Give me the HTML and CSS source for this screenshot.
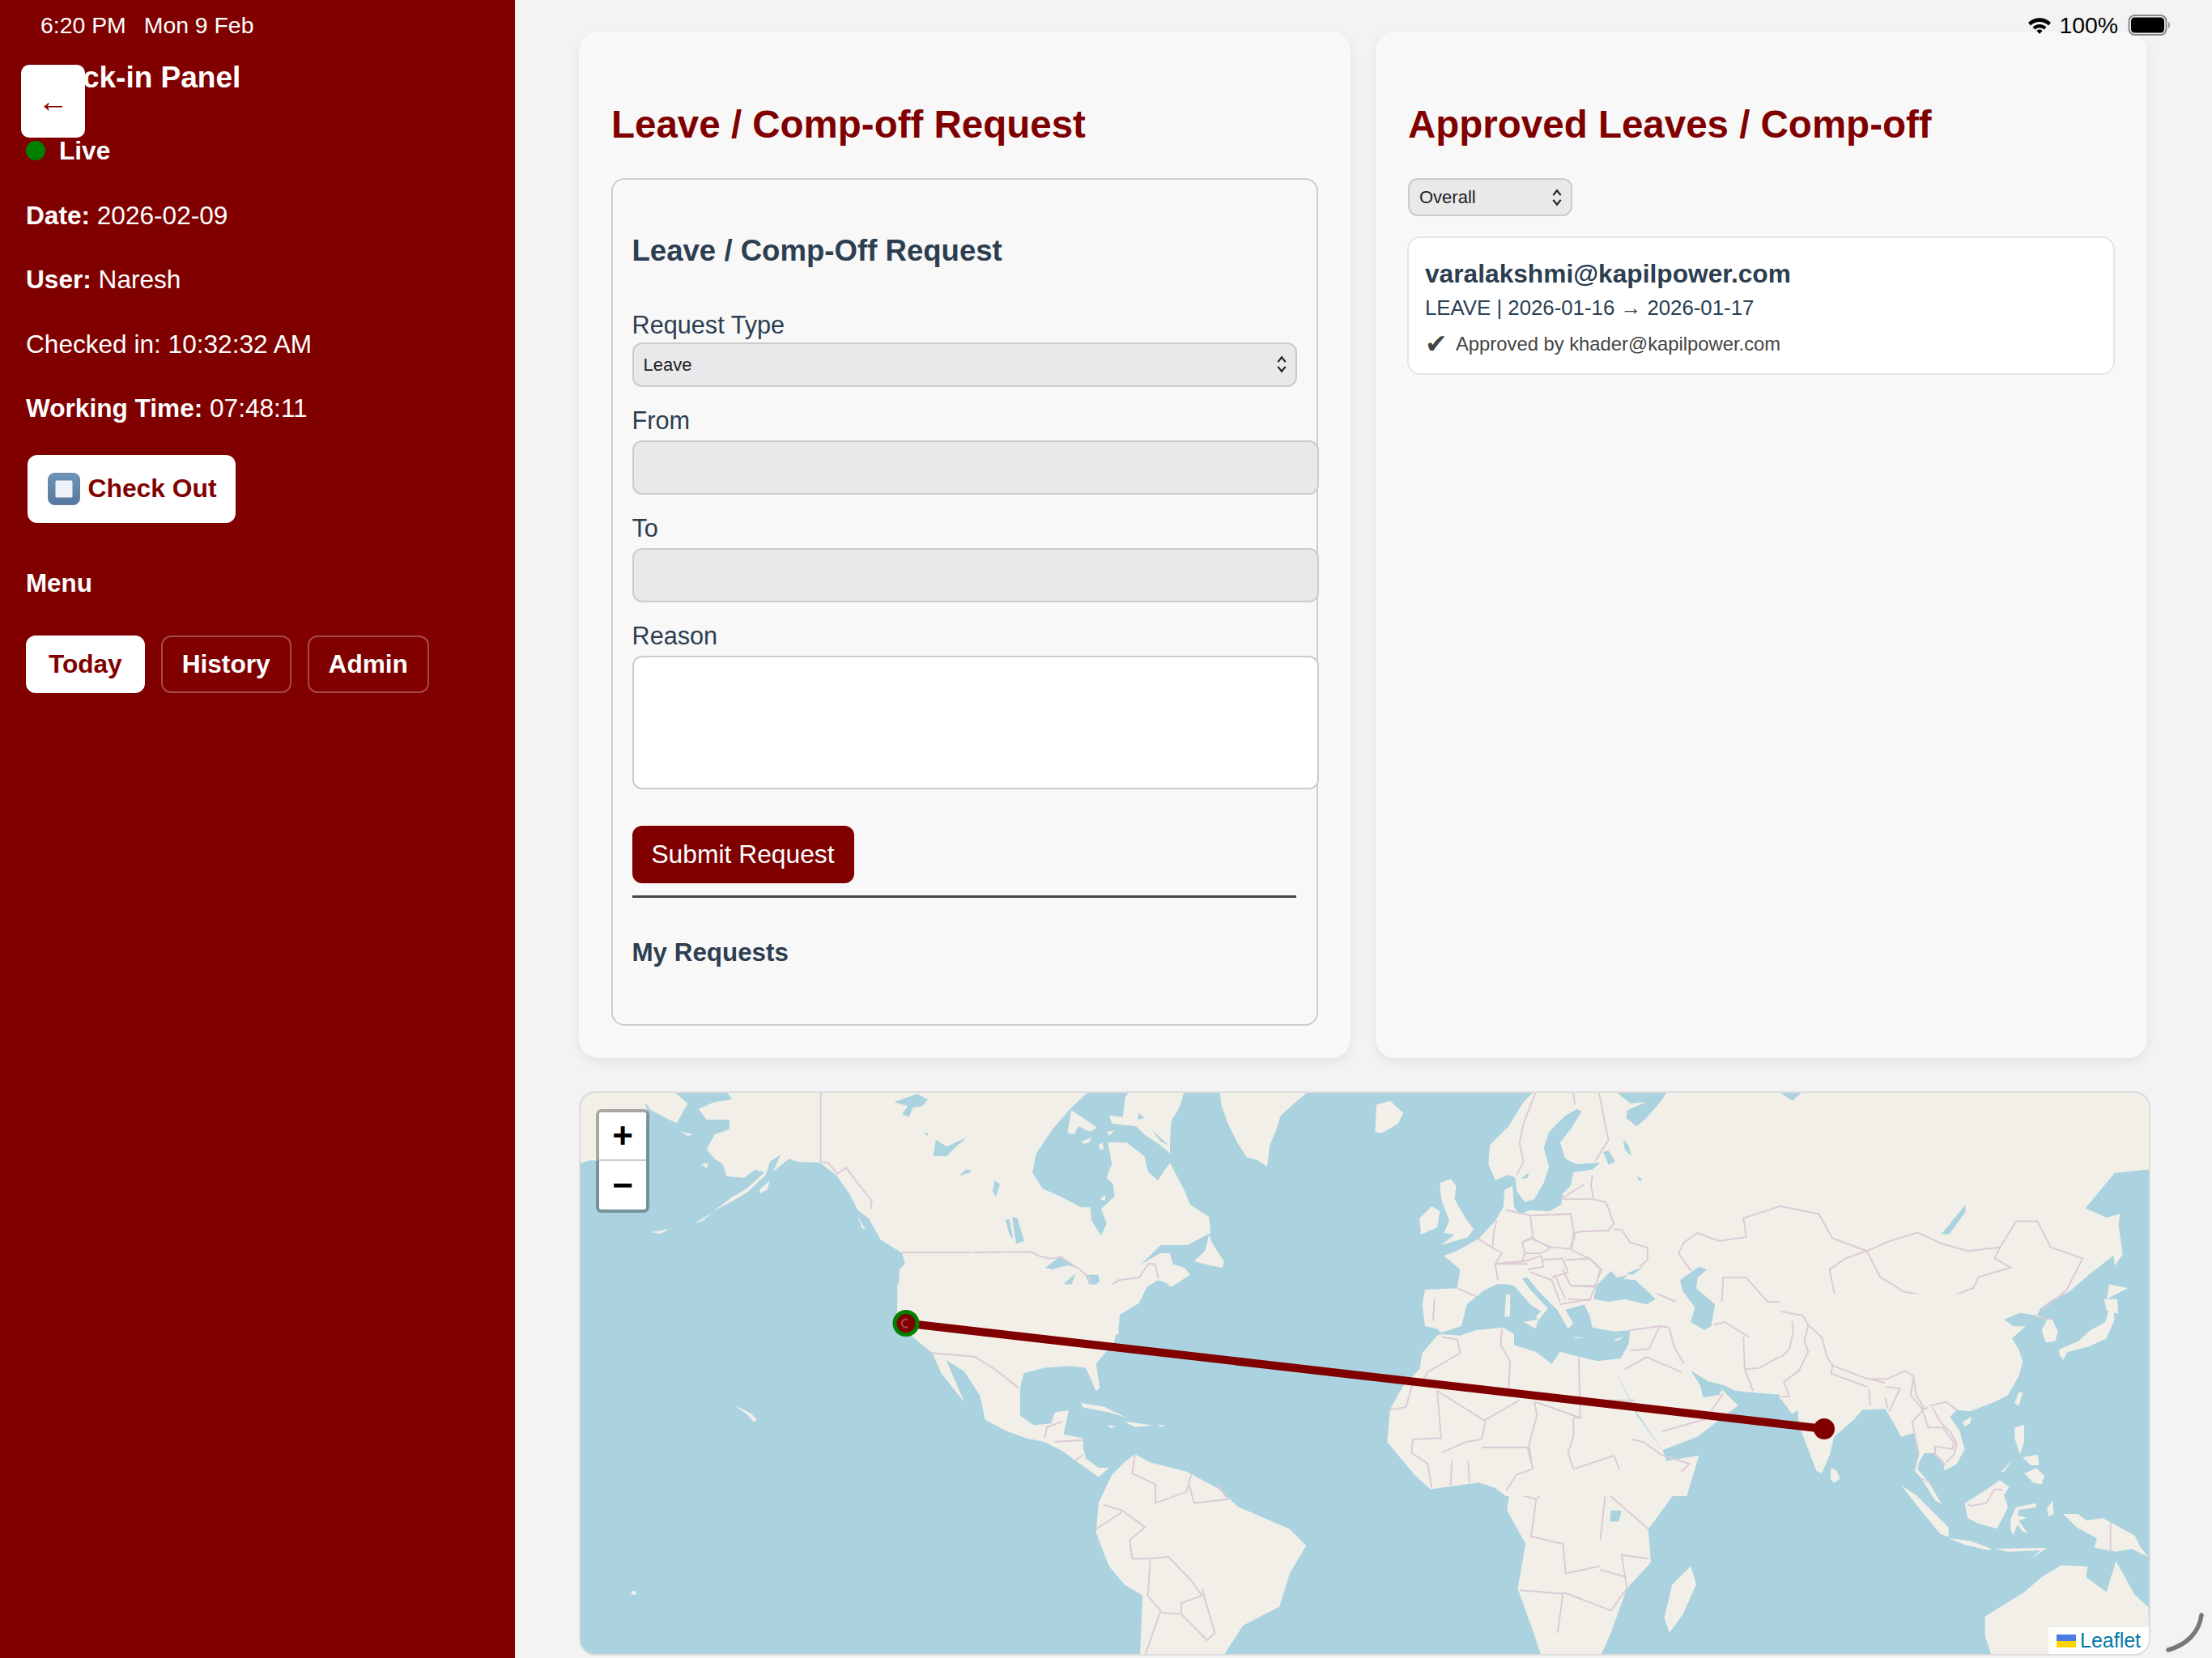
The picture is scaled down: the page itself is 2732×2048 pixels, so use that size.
FILE: index.html
```html
<!doctype html>
<html lang="en">

<head>
    <meta charset="UTF-8">
    <title>Check-in Panel</title>
    <link rel="stylesheet" href="styles.css">
</head>

<body>
    <div class="statusbar">
        <div class="status-left"><span>6:20 PM</span><span>Mon 9 Feb</span></div>
        <div class="status-right">
            <svg class="wifi" viewBox="0 0 30 22">
                <path d="M1 8 A20 20 0 0 1 29 8 L26 11.5 A15.500 15.500 0 0 0 4 11.500 Z" />
                <path d="M6.500 13.500 A12 12 0 0 1 23.500 13.500 L20.500 16.500 A8 8 0 0 0 9.500 16.500 Z" />
                <path d="M11.500 18 A5 5 0 0 1 18.500 18 L15 22 Z" />
            </svg>
            <span>100%</span>
            <svg class="battery" viewBox="0 0 53 26">
                <rect x="1" y="1" width="46" height="24" rx="7" class="battery-case" />
                <rect x="3.500" y="3.500" width="41" height="19" rx="4.500" />
                <path d="M49.500 9 C52 10 52 16 49.500 17 Z" class="battery-case-nub" />
            </svg>
        </div>
    </div>

    <div class="corner-grip">
        <svg viewBox="0 0 50 50">
            <path d="M45 3 C42 25 26 40 4 46" />
        </svg>
    </div>

    <div class="layout">
        <aside class="sidebar">
            <button class="back-button">←</button>
            <h3 class="panel-title">Check-in Panel</h3>
            <p class="info live-row"><span class="live-dot"></span><b>Live</b></p>
            <p class="info"><b>Date:</b> 2026-02-09</p>
            <p class="info"><b>User:</b> Naresh</p>
            <p class="info">Checked in: 10:32:32 AM</p>
            <p class="info"><b>Working Time:</b> 07:48:11</p>
            <button class="checkout-button">
                <svg class="stop-icon" viewBox="0 0 40 40">
                    <defs>
                        <linearGradient id="stopFill" x1="0" y1="0" x2="0" y2="1">
                            <stop offset="0" stop-color="#6f95bb" />
                            <stop offset="1" stop-color="#54799f" />
                        </linearGradient>
                    </defs>
                    <rect x="0.500" y="0.500" width="39" height="39" rx="8" fill="url(#stopFill)" stroke="#6f7f90" />
                    <rect x="9.500" y="9.500" width="21" height="21" rx="1.500" fill="#eef2f8" />
                </svg>
                Check Out
            </button>
            <h4 class="menu-title">Menu</h4>
            <nav class="menu">
                <button class="menu-button active">Today</button>
                <button class="menu-button">History</button>
                <button class="menu-button">Admin</button>
            </nav>
        </aside>

        <main class="content">
            <div class="cards">
                <section class="card">
                    <h2 class="card-title">Leave / Comp-off Request</h2>
                    <div class="request-box">
                        <h3 class="box-title">Leave / Comp-Off Request</h3>
                        <label class="field-label first">Request Type</label>
                        <div class="select-wrap">
                            <select class="select-wide">
                                <option>Leave</option>
                            </select>
                            <svg class="chevrons" viewBox="0 0 12 20">
                                <path d="M2 7.500 L6 2.500 L10 7.500 M2 12.500 L6 17.500 L10 12.500" />
                            </svg>
                        </div>
                        <label class="field-label">From</label>
                        <input class="date-input" type="text" disabled>
                        <label class="field-label">To</label>
                        <input class="date-input" type="text" disabled>
                        <label class="field-label">Reason</label>
                        <textarea class="reason-input"></textarea>
                        <button class="submit-button">Submit Request</button>
                        <hr class="divider">
                        <h4 class="requests-title">My Requests</h4>
                    </div>
                </section>

                <section class="card">
                    <h2 class="card-title">Approved Leaves / Comp-off</h2>
                    <div class="select-wrap select-small">
                        <select class="select-wide">
                            <option>Overall</option>
                        </select>
                        <svg class="chevrons" viewBox="0 0 12 20">
                            <path d="M2 7.500 L6 2.500 L10 7.500 M2 12.500 L6 17.500 L10 12.500" />
                        </svg>
                    </div>
                    <div class="approved-item">
                        <div class="approved-name">varalakshmi@kapilpower.com</div>
                        <div class="approved-dates">LEAVE | 2026-01-16 → 2026-01-17</div>
                        <div class="approved-by"><span class="tick">✔</span>Approved by khader@kapilpower.com</div>
                    </div>
                </section>
            </div>

            <div class="map">
                <svg class="map-tiles" viewBox="717 1350 1937 693">
                    <!-- alaska and the west -->
                    <g transform="translate(716 1348) scale(0.3333)">
                        <path class="land" d="M-5,-5 L340,-5 L400,45 L360,118 L320,100 L265,70 L240,40 L250,70 L240,250 L70,258 L40,255 L-5,270 Z" />
                        <path class="land" d="M540,-5 L565,30 L500,40 L440,65 L470,105 L555,105 L555,140 L500,160 L470,215 L500,250 L530,270 L545,315 L610,320 L650,290 L685,300 L620,360 L560,395 L495,445 L560,410 L620,375 L690,310 L705,260 L745,235 L715,300 L775,250 L810,262 L890,265 L950,310 L1000,380 L1030,440 L1070,470 L1115,550 L1195,600 L1205,640 L1185,660 L1180,760 L1175,830 L1500,900 L1500,-5 Z" />
                        <path class="land" d="M665,365 L705,330 L695,365 L670,378 Z" />
                        <path class="land" d="M372,148 L420,160 L400,165 Z" />
                        <path class="land" d="M450,270 L478,265 L470,285 Z" />
                        <path class="land" d="M1030,460 L1060,515 L1045,505 Z" />
                        <path class="land" d="M425,490 L495,447 L455,480 Z" />
                        <path class="land" d="M265,522 L330,510 L300,528 Z" />
                        <path class="sea" d="M1165,40 L1250,10 L1290,30 L1270,55 L1235,60 L1220,95 L1195,85 L1215,55 Z" />
                        <path class="sea" d="M1310,240 L1320,180 L1360,205 L1435,170 L1390,210 L1360,240 Z" />
                        <path class="sea" d="M1405,315 L1430,290 L1490,295 L1430,305 Z" />
                        <path class="sea" d="M1275,150 L1295,160 L1285,165 Z" />
                        <path class="border" d="M893,0 L893,262 L920,265 L955,305 L988,283 L1030,340 L1082,405 L1078,435" />
                        <path class="border" d="M1195,597 L1500,597" />
                    </g>
                    <!-- canada east and greenland -->
                    <g transform="translate(1200 1348) scale(0.3333)">
                        <path class="land" d="M-5,-5 L440,-5 L370,60 L300,140 L240,230 L225,300 L262,360 L340,395 L405,430 L440,430 L445,480 L480,535 L500,490 L480,435 L530,390 L525,345 L500,320 L520,270 L505,190 L575,190 L640,240 L655,300 L690,330 L735,265 L790,370 L810,420 L880,465 L885,525 L800,570 L700,570 L630,640 L700,600 L735,600 L745,640 L790,655 L810,680 L740,725 L720,710 L690,700 L650,725 L620,785 L545,830 L545,900 L-5,900 Z" />
                        <path class="land" d="M880,530 L890,560 L935,630 L930,655 L885,645 L825,630 L865,590 Z" />
                        <path class="land" d="M510,90 L560,95 L570,20 L590,-5 L790,-5 L770,60 L740,110 L735,190 L735,230 L700,200 L640,160 L610,130 L520,120 Z" />
                        <path class="land" d="M355,155 L370,70 L400,90 L465,135 L440,150 L395,130 L380,160 Z" />
                        <path class="land" d="M410,185 L445,170 L435,190 L415,195 Z" />
                        <path class="land" d="M470,200 L485,190 L490,215 L478,218 Z" />
                        <path class="land" d="M500,150 L530,145 L510,165 Z" />
                        <path class="land" d="M475,400 L495,385 L495,405 Z" />
                        <path class="land" d="M920,-5 L1255,-5 L1195,45 L1145,90 L1130,140 L1105,200 L1095,280 L1060,255 L1020,245 L985,190 L950,120 L925,50 Z" />
                        <path class="sea" d="M670,145 L715,185 L730,200 L700,185 Z" />
                        <path class="sea" d="M620,80 L640,100 L615,105 Z" />
                        <path class="sea" d="M272,655 L330,610 L395,655 L355,645 L300,660 Z" />
                        <path class="sea" d="M345,770 L345,710 L385,675 L370,720 L360,775 Z" />
                        <path class="sea" d="M420,680 L470,680 L475,705 L440,730 L430,700 Z" />
                        <path class="sea" d="M420,775 L490,740 L480,755 L430,778 Z" />
                        <path class="sea" d="M490,735 L535,725 L520,738 Z" />
                        <path class="sea" d="M150,465 L170,470 L195,555 L165,565 Z" />
                        <path class="sea" d="M125,475 L140,475 L155,550 L140,530 Z" />
                        <path class="sea" d="M85,330 L105,345 L90,390 L78,370 Z" />
                        <path class="border" d="M0,597 L220,595 L250,610 L290,620 L330,615 L400,660 L435,690 L440,735 L420,770 M490,735 L545,700 L620,690 L655,640 L680,640 L692,695" />
                    </g>
                    <!-- usa, mexico, south america -->
                    <g transform="translate(700 1330) scale(0.6378 0.4579)">
                        <path class="land" d="M640,600 L640,630 L668,700 L708,745 L725,800 L770,878 L755,830 L735,765 L770,795 L800,860 L810,925 L850,955 L890,975 L925,985 L960,1010 L985,1035 L1005,1055 L1030,1080 L1050,1055 L1030,1055 L1005,1030 L1000,1000 L1000,975 L962,965 L972,900 L945,905 L938,935 L905,940 L878,915 L878,840 L885,800 L925,785 L975,780 L1005,785 L1025,848 L1032,840 L1025,775 L1060,715 L1070,660 L1075,560 L640,560 Z" />
                        <path class="land" d="M1100,1018 L1080,1040 L1055,1075 L1030,1150 L1025,1230 L1050,1320 L1080,1370 L1115,1400 L1110,1565 L1270,1565 L1310,1480 L1380,1430 L1400,1340 L1432,1265 L1400,1220 L1300,1160 L1260,1110 L1200,1065 L1130,1040 Z" />
                        <path class="land" d="M995,880 L1040,890 L1085,920 L1050,905 L1000,892 Z" />
                        <path class="land" d="M1080,930 L1135,940 L1100,945 Z" />
                        <path class="land" d="M1145,938 L1160,942 L1148,945 Z" />
                        <path class="land" d="M1048,940 L1065,943 L1052,948 Z" />
                        <path class="land" d="M325,888 L345,900 L358,910 L368,925 L362,932 L350,912 Z" />
                        <circle class="land" cx="130" cy="1392" r="5" />
                        <path class="border" d="M705,745 L790,755 L830,790 L875,840" />
                        <path class="border" d="M925,975 L930,945 L960,930 M945,985 L1000,980 M985,1035 L1000,1020" />
                        <path class="border" d="M1100,1020 L1095,1070 L1140,1100 L1140,1150 L1200,1120 L1210,1070 M1205,1100 L1215,1150 L1280,1140 L1260,1100" />
                        <path class="border" d="M1040,1155 L1075,1170 L1120,1215 L1090,1250 L1095,1300 L1130,1300 L1165,1295 L1210,1360 L1230,1400 L1190,1420 L1190,1450 L1240,1520 L1255,1500 L1230,1380" />
                        <path class="border" d="M1130,1305 L1125,1400 L1150,1440 L1120,1560 M1150,1445 L1190,1450 M1025,1220 L1075,1175" />
                    </g>
                    <!-- north asia and south africa -->
                    <g transform="translate(1700 1330) scale(0.6583 0.4579)">
                        <path class="land" d="M205,1095 L590,1065 L510,1220 L515,1310 L470,1380 L440,1500 L420,1565 L310,1565 L290,1480 L265,1380 L280,1260 L245,1170 L250,1120 Z" />
                        <path class="land" d="M640,40 L1450,40 L1450,250 L1385,260 L1330,355 L1370,380 L1395,370 L1385,480 L1340,530 L1300,580 L1240,620 L1185,630 L640,640 Z" />
                        <path class="land" d="M590,1320 L600,1370 L575,1450 L550,1500 L540,1460 L555,1370 Z" />
                        <path class="land" d="M1390,375 L1400,480 L1385,510 L1380,430 Z" />
                        <path class="land" d="M1375,560 L1410,570 L1370,600 Z" />
                        <path class="land" d="M1365,600 L1390,600 L1392,640 L1370,630 Z" />
                        <path class="sea" d="M755,40 L800,40 L780,65 Z" />
                        <path class="sea" d="M1060,425 L1105,345 L1105,365 L1075,425 Z" />
                        <path class="sea" d="M800,530 L850,515 L815,525 Z" />
                        <path class="sea" d="M440,1170 L460,1170 L455,1200 L438,1200 Z" />
                        <path class="border" d="M760,350 L830,370 L855,435 L920,470" />
                        <path class="border" d="M920,470 L945,540 L990,580 L1065,600 L1120,570 L1130,540 L1190,515 L1160,490 L1170,460 L1110,470 L1060,450 L1015,420 L960,445 L920,470 M1170,460 L1200,390 L1240,390 L1265,460 L1325,490 L1295,575 L1250,630" />
                        <path class="border" d="M760,610 L790,590 L860,590 L850,520 L880,490 L920,470" />
                        <path class="border" d="M400,1100 L500,1120 L580,1065" />
                        <path class="border" d="M250,1120 L300,1140 L320,1110 L430,1120 L420,1250 M300,1140 L290,1240 L350,1260 L355,1340 L420,1320 M430,1120 L510,1220 M270,1385 L350,1395 L340,1500 M350,1390 L440,1440 L470,1380 L460,1290 L510,1300 M420,1330 L470,1350" />
                    </g>
                    <!-- europe, north africa, middle east -->
                    <g transform="translate(1700 1348) scale(0.3333)">
                        <path class="land" d="M240,900 L310,905 L370,885 L470,875 L510,900 L510,940 L590,965 L650,1010 L680,965 L755,985 L820,1000 L905,990 L880,1030 L965,1200 L1060,1330 L1075,1370 L1195,1350 L1150,1500 L480,1500 L440,1470 L380,1450 L200,1475 L140,1420 L40,1300 L50,1180 L100,1090 L160,1030 L170,970 L225,905 Z" />
                        <path class="land" d="M590,-5 L545,40 L490,130 L420,200 L415,270 L440,330 L490,310 L515,320 L520,370 L550,410 L585,400 L620,340 L640,280 L620,210 L640,150 L700,90 L745,65 L760,75 L720,140 L680,190 L700,250 L740,270 L830,265 L800,290 L730,300 L720,350 L690,380 L685,420 L640,445 L570,440 L530,455 L510,430 L505,350 L475,365 L470,430 L440,480 L380,545 L300,590 L250,610 L310,660 L300,730 L180,735 L170,790 L180,870 L225,880 L240,895 L315,870 L335,790 L395,740 L445,715 L480,715 L510,720 L570,790 L610,815 L590,835 L600,850 L635,805 L570,735 L540,695 L560,690 L600,740 L670,810 L710,880 L730,860 L700,810 L770,790 L790,830 L800,875 L880,890 L940,885 L935,935 L905,990 L880,1030 L965,1190 L1060,1330 L1190,1280 L1340,1165 L1280,1105 L1270,1125 L1210,1135 L1200,1090 L1155,1020 L1140,1010 L1165,1035 L1230,1075 L1290,1090 L1330,1110 L1500,1125 L1500,-5 Z" />
                        <path class="land" d="M0,50 L50,35 L100,80 L80,120 L20,155 L-5,150 Z" />
                        <path class="land" d="M235,340 L275,325 L295,350 L290,400 L330,470 L360,510 L340,540 L240,570 L290,530 L250,525 L270,480 L255,440 L240,400 Z" />
                        <path class="land" d="M160,470 L205,425 L235,445 L225,505 L165,530 Z" />
                        <path class="land" d="M480,755 L495,750 L495,835 L475,835 Z" />
                        <path class="land" d="M545,855 L600,845 L590,880 Z" />
                        <path class="land" d="M730,910 L775,915 L740,915 Z" />
                        <path class="land" d="M880,920 L915,910 L895,925 Z" />
                        <path class="sea" d="M805,770 L815,720 L870,665 L890,690 L930,680 L915,695 L960,700 L1035,770 L1000,790 L920,770 L860,780 Z" />
                        <path class="sea" d="M925,675 L990,650 L950,680 Z" />
                        <path class="sea" d="M1125,700 L1195,650 L1225,660 L1190,690 L1185,730 L1255,790 L1240,870 L1215,885 L1165,855 L1180,800 L1135,740 Z" />
                        <path class="sea" d="M880,-5 L1080,-5 L1060,30 L1000,100 L965,130 L925,100 L930,70 L1000,40 L940,45 Z" />
                        <path class="sea" d="M840,225 L860,220 L885,260 L860,272 Z" />
                        <path class="sea" d="M915,180 L935,200 L945,240 L920,215 Z" />
                        <path class="sea" d="M535,325 L565,300 L560,320 Z" />
                        <path class="sea" d="M965,315 L985,325 L975,335 Z" />
                        <path class="border" d="M590,5 L545,120 L530,190 L545,260 L520,310 M730,5 L735,50 M825,5 L845,110 L860,180 L810,260" />
                        <path class="border" d="M800,310 L795,350 L805,400 M690,400 L800,400 L850,410 L880,490 L860,515 L760,520 L730,525 M690,395 L770,345 M880,510 L910,515 L940,560 L1005,580 L1005,625 L975,650 M730,525 L725,590 L790,620 L830,660 L820,690" />
                        <path class="border" d="M1120,600 L1140,560 L1190,525 L1270,555 L1370,540 L1360,470 L1500,425 M1120,600 L1165,665" />
                        <path class="border" d="M480,440 L570,460 L580,540 L540,560 L550,600 L540,630 L440,640 L465,600 L430,580 L435,520 L445,480 M375,545 L430,580 M440,640 L450,700 M300,730 L370,760" />
                        <path class="border" d="M575,460 L720,455 L735,540 L715,585 L640,575 L570,545 M540,560 L580,545 L645,580 L610,600 L550,600 M470,635 L550,630 L610,610 L620,650 L560,660 M610,625 L690,620 L710,670 L650,690 M700,625 L790,620 L835,660 L810,720 L720,720 L690,660 M720,720 L810,725 L790,775 L710,770 M570,670 L650,700 L680,780 M660,680 L700,770 M680,790 L790,770 M215,770 L210,850 M450,640 L560,640" />
                        <path class="border" d="M240,910 L300,920 L310,970 L190,1040 L180,1060 L130,1095 L110,1170 L50,1180 M465,880 L460,940 L495,1000 L490,1100 M225,1110 L400,1220 L530,1145 M225,1110 L240,1285 L135,1290 M750,985 L755,1210 L585,1150 M405,1220 L390,1290 L330,1300 L240,1340 M585,1150 L595,1200 L565,1310 L575,1370 M730,1210 L730,1280 L710,1340 L730,1400 M755,1145 L960,1145 M750,1210 L730,1210 M730,1400 L880,1350 L900,1400 M945,1290 L990,1300 L1060,1350 L1160,1380 L1130,1410 M390,1320 L560,1320 L580,1400 L520,1420 L480,1480 M135,1290 L130,1340 L190,1380 M280,1370 L275,1460 M340,1370 L345,1450 M190,1380 L205,1470" />
                        <path class="border" d="M940,885 L1050,870 L1085,875 M1085,880 L1105,950 L1140,1010 M940,960 L1010,955 L1050,870 M920,1030 L1000,985 L1130,1040 M1060,1260 L1220,1215 L1285,1120 M1360,910 L1365,1030 L1395,1110 M1250,865 L1290,855 L1380,910 M1365,1030 L1420,1025 L1500,980 M1285,690 L1280,780 M1285,690 L1370,690 L1450,780 L1500,780 M1110,780 L1040,750" />
                    </g>
                    <!-- south and south east asia, australia -->
                    <g transform="translate(2200 1600) scale(0.3333)">
                        <path class="land" d="M-5,-5 L1030,-5 L960,50 L945,80 L1005,90 L1025,135 L1015,170 L980,175 L965,130 L985,90 L950,75 L885,65 L825,90 L860,115 L905,115 L855,160 L880,200 L895,245 L880,300 L840,370 L790,395 L700,430 L650,425 L625,450 L660,500 L680,570 L650,625 L605,650 L600,615 L570,585 L530,585 L510,620 L505,645 L545,690 L595,775 L570,760 L520,680 L495,650 L510,590 L490,510 L445,525 L420,480 L385,420 L300,425 L270,460 L195,525 L180,590 L150,660 L130,650 L90,545 L65,480 L60,425 L40,440 L0,385 L-5,385 Z" />
                        <path class="land" d="M185,640 L205,650 L218,680 L195,695 L182,680 Z" />
                        <path class="land" d="M670,470 L705,450 L700,475 L680,485 Z" />
                        <path class="land" d="M880,360 L895,360 L880,410 L865,400 Z" />
                        <path class="land" d="M1030,200 L1100,170 L1145,130 L1200,100 L1215,50 L1205,30 L1230,40 L1235,90 L1205,160 L1140,190 L1060,210 L1045,240 L1030,220 Z" />
                        <path class="land" d="M865,490 L900,480 L900,540 L885,590 L865,530 Z" />
                        <path class="land" d="M895,600 L950,590 L955,630 L925,630 Z" />
                        <path class="land" d="M900,660 L945,640 L975,670 L965,700 L935,695 Z" />
                        <path class="land" d="M815,655 L860,605 L825,655 Z" />
                        <path class="land" d="M680,770 L760,720 L810,685 L845,710 L825,740 L840,785 L800,865 L730,845 L690,825 Z" />
                        <path class="land" d="M445,705 L500,740 L590,830 L620,860 L620,895 L590,885 L520,800 Z" />
                        <path class="land" d="M620,900 L700,910 L780,940 L770,945 L680,925 Z" />
                        <path class="land" d="M790,940 L985,935 L920,980 L960,945 L840,950 Z" />
                        <path class="land" d="M850,830 L870,785 L945,770 L945,785 L880,795 L875,815 L910,825 L880,835 L915,885 L890,870 L875,850 L860,890 L850,870 Z" />
                        <path class="land" d="M985,790 L1005,760 L1010,810 L990,820 Z" />
                        <path class="land" d="M1045,810 L1100,810 L1130,835 L1190,825 L1310,890 L1330,930 L1360,970 L1300,940 L1240,950 L1160,935 L1170,900 L1095,860 Z" />
                        <path class="land" d="M755,1190 L820,1150 L900,1100 L970,1040 L1040,1000 L1135,1005 L1130,1045 L1205,1100 L1240,985 L1310,1110 L1360,1155 L1365,1340 L780,1340 L755,1260 Z" />
                        <path class="border" d="M100,110 L150,155 L170,230 L190,260 L320,310 L390,310 L460,280 L490,300 L500,370 L530,420 M190,260 L185,290 L320,340 M330,310 L385,325 M325,345 L330,410 M385,380 L395,420 M390,340 L440,345 L400,430 M490,300 L480,370 L525,425 L545,415" />
                        <path class="border" d="M85,170 L100,210 L65,280 L10,320 L30,375 L0,375 M100,110 L85,170 M0,60 L80,75 L100,110 M40,95 L45,130 L30,200 L0,230" />
                        <path class="border" d="M525,425 L485,470 L510,590 M525,430 L545,490 L600,490 L640,545 L635,570 L570,560 L570,590 L610,630 M550,410 L610,395 L650,425 M560,415 L590,470 L630,510 L650,550 L640,590 L610,620" />
                        <path class="border" d="M520,680 L555,695 M690,775 L705,780 L760,770 L790,720 L820,720 M1220,845 L1220,950 M945,80 L1005,90" />
                    </g>
                    <path class="route" d="M1119,1634.500 L2253,1765" />
                    <circle class="marker-start" cx="1119" cy="1634.500" r="14" />
                    <path class="marker-mark" d="M1121,1630 A5,5 0 1 0 1121,1639" />
                    <circle class="marker-end" cx="2253" cy="1765" r="13" />
                </svg>

                <div class="zoom-control">
                    <button class="zoom-button">+</button>
                    <button class="zoom-button">−</button>
                </div>
                <div class="attribution">
                    <svg class="flag" viewBox="0 0 24 16">
                        <rect width="24" height="8" fill="#4c7be1" />
                        <rect y="8" width="24" height="8" fill="#ffd500" />
                    </svg>
                    <span>Leaflet</span>
                </div>
            </div>
        </main>
    </div>
</body>

</html>
```

FILE: styles.css
```css
* {
    margin: 0;
    padding: 0;
    box-sizing: border-box;
}

body {
    position: relative;
    width: 2732px;
    height: 2048px;
    overflow: hidden;
    background-color: #f3f3f3;
    color: #2c3e50;
    font-family: "Liberation Sans", Arial, sans-serif;
    font-size: 31.6px;
}

button,
select,
input,
textarea {
    font-family: "Liberation Sans", Arial, sans-serif;
}

.layout {
    display: flex;
    height: 2048px;
}

/* ipad status bar */
.statusbar {
    position: absolute;
    top: 14px;
    left: 50px;
    width: 2632px;
    height: 34px;
    display: flex;
    justify-content: space-between;
    align-items: center;
    font-size: 28.400px;
    z-index: 10;
}

.status-left {
    display: flex;
    gap: 22px;
    color: #fff;
}

.status-right {
    display: flex;
    align-items: center;
    gap: 9px;
    color: #000;
}

.wifi {
    width: 30px;
    height: 22px;
}

.battery {
    width: 54px;
    height: 26px;
    margin-left: 3px;
}

.battery-case {
    fill: none;
    stroke: #8a8a8a;
    stroke-width: 2;
}

.battery-case-nub {
    fill: #8a8a8a;
}

.corner-grip {
    position: absolute;
    left: 2674px;
    top: 1992px;
    width: 50px;
    height: 50px;
}

.corner-grip path {
    fill: none;
    stroke: #777;
    stroke-width: 5.500;
    stroke-linecap: round;
}

/* sidebar */
.sidebar {
    position: relative;
    flex: 0 0 636px;
    background-color: #800000;
    color: #fff;
    padding: 75px 32px 0;
}

.back-button {
    position: absolute;
    left: 26px;
    top: 80px;
    width: 79px;
    height: 90px;
    border: none;
    border-radius: 10px;
    background-color: #fff;
    color: #800000;
    font-size: 38px;
    font-weight: normal;
}

.panel-title {
    font-size: 37px;
    line-height: 42px;
    margin-bottom: 45px;
}

.info {
    line-height: 48px;
    margin-bottom: 31.500px;
}

.live-row {
    display: flex;
    align-items: center;
}

.live-dot {
    width: 24px;
    height: 24px;
    border-radius: 50%;
    background-color: #008000;
    margin-right: 17px;
}

.checkout-button {
    display: flex;
    align-items: center;
    gap: 10px;
    width: 257px;
    height: 84px;
    margin: 33.500px 0 0 2px;
    padding-left: 24.500px;
    border: none;
    border-radius: 12px;
    background-color: #fff;
    color: #800000;
    font-size: 31.800px;
    font-weight: bold;
}

.stop-icon {
    width: 40px;
    height: 40px;
}

.menu-title {
    font-size: 31.360px;
    line-height: 48px;
    margin-top: 51px;
}

.menu {
    display: flex;
    gap: 20px;
    margin-top: 40px;
}

.menu-button {
    height: 71px;
    padding: 0 24px;
    border: 2px solid #a84848;
    border-radius: 12px;
    background: transparent;
    color: #fff;
    font-size: 31.600px;
    font-weight: bold;
}

.menu-button.active {
    padding: 0 26px;
    background-color: #fff;
    border-color: #fff;
    color: #800000;
}

/* main area */
.content {
    flex: 1;
    padding: 39px 0 0 79px;
}

.cards {
    display: grid;
    grid-template-columns: 953px 953px;
    gap: 31px;
}

.card {
    height: 1268px;
    padding: 40px;
    border-radius: 24px;
    background-color: #f8f8f8;
    box-shadow: 0 5px 14px rgba(0, 0, 0, 0.07);
}

.card-title {
    margin-top: 48px;
    margin-bottom: 39px;
    color: #800000;
    font-size: 47.500px;
    line-height: 54px;
}

.request-box {
    height: 1047px;
    padding: 66.500px 23.500px 0;
    border: 2px solid #ccc;
    border-radius: 16px;
}

.box-title {
    font-size: 36.600px;
    line-height: 42px;
    margin-bottom: 53px;
}

.field-label {
    display: block;
    height: 35px;
    line-height: 35px;
    font-size: 30.660px;
    margin-bottom: 7.500px;
}

.field-label.first {
    margin-bottom: 4.500px;
}

.select-wrap {
    position: relative;
    width: 821px;
    height: 54.500px;
    margin-bottom: 24px;
}

.select-wide {
    display: block;
    width: 100%;
    height: 100%;
    padding-left: 12px;
    border: 2px solid #ccc;
    border-radius: 12px;
    background-color: #e9e9eb;
    color: #222;
    font-size: 22px;
    appearance: none;
}

.chevrons {
    position: absolute;
    right: 12px;
    top: 50%;
    width: 14px;
    height: 24px;
    margin-top: -12px;
}

.chevrons path {
    fill: none;
    stroke: #222;
    stroke-width: 1.800;
}

.date-input {
    display: block;
    width: 848px;
    height: 66.500px;
    margin-bottom: 24px;
    border: 2px solid #ccc;
    border-radius: 12px;
    background-color: #e9e9eb;
}

.reason-input {
    display: block;
    width: 848px;
    height: 165px;
    border: 2px solid #ccc;
    border-radius: 12px;
    background-color: #fff;
    resize: none;
}

.submit-button {
    display: block;
    width: 274px;
    height: 71.600px;
    margin-top: 44.600px;
    border: none;
    border-radius: 12px;
    background-color: #800000;
    color: #fff;
    font-size: 31.800px;
}

.divider {
    width: 820px;
    height: 3px;
    margin-top: 15px;
    border: none;
    background-color: #444;
}

.requests-title {
    font-size: 31.360px;
    line-height: 36px;
    margin-top: 50px;
}

.select-small {
    width: 203px;
    height: 47px;
    margin-bottom: 25px;
}

.approved-item {
    width: 874px;
    height: 171px;
    margin-left: -1px;
    padding: 26px 20px 0;
    border: 2px solid #e5e5e5;
    border-radius: 16px;
    background-color: #fff;
}

.approved-name {
    font-size: 31.700px;
    font-weight: bold;
    line-height: 36px;
}

.approved-dates {
    margin-top: 8px;
    font-size: 25.800px;
    line-height: 32px;
}

.approved-by {
    display: flex;
    align-items: center;
    margin-top: 15px;
    color: #444;
    font-size: 23.800px;
    line-height: 28px;
}

.tick {
    width: 38px;
    font-family: "DejaVu Sans", sans-serif;
    font-size: 33px;
    line-height: 28px;
}

/* map */
.map {
    position: relative;
    width: 1941px;
    height: 697px;
    margin-top: 41px;
    overflow: hidden;
    border: 2px solid #ddd;
    border-radius: 20px;
    background-color: #aad3df;
}

.map-tiles {
    display: block;
    width: 100%;
    height: 100%;
}

.land {
    fill: #f2efe9;
}

.sea {
    fill: #aad3df;
}

.border {
    fill: none;
    stroke: #dccbd6;
    stroke-width: 2;
    vector-effect: non-scaling-stroke;
}

.route {
    fill: none;
    stroke: #800000;
    stroke-width: 10;
    stroke-linecap: round;
}

.marker-start {
    fill: #800000;
    stroke: #008000;
    stroke-width: 5;
}

.marker-mark {
    fill: none;
    stroke: #b04a4a;
    stroke-width: 2;
}

.marker-end {
    fill: #800000;
}

.zoom-control {
    position: absolute;
    left: 19px;
    top: 20px;
    width: 66px;
    height: 128px;
    overflow: hidden;
    border: 4px solid rgba(0, 0, 0, 0.3);
    border-radius: 7px;
    background-clip: padding-box;
}

.zoom-button {
    display: block;
    width: 100%;
    height: 60px;
    border: none;
    border-bottom: 2px solid #ccc;
    background-color: #fff;
    color: #000;
    font-size: 44px;
    font-weight: bold;
    line-height: 58px;
}

.zoom-button:last-child {
    border-bottom: none;
}

.attribution {
    position: absolute;
    right: 0;
    bottom: 0;
    display: flex;
    align-items: center;
    gap: 5px;
    width: 124px;
    height: 33px;
    padding-left: 10px;
    background-color: rgba(255, 255, 255, 0.9);
    color: #0078a8;
    font-size: 25px;
}

.flag {
    width: 24px;
    height: 16px;
}
```
